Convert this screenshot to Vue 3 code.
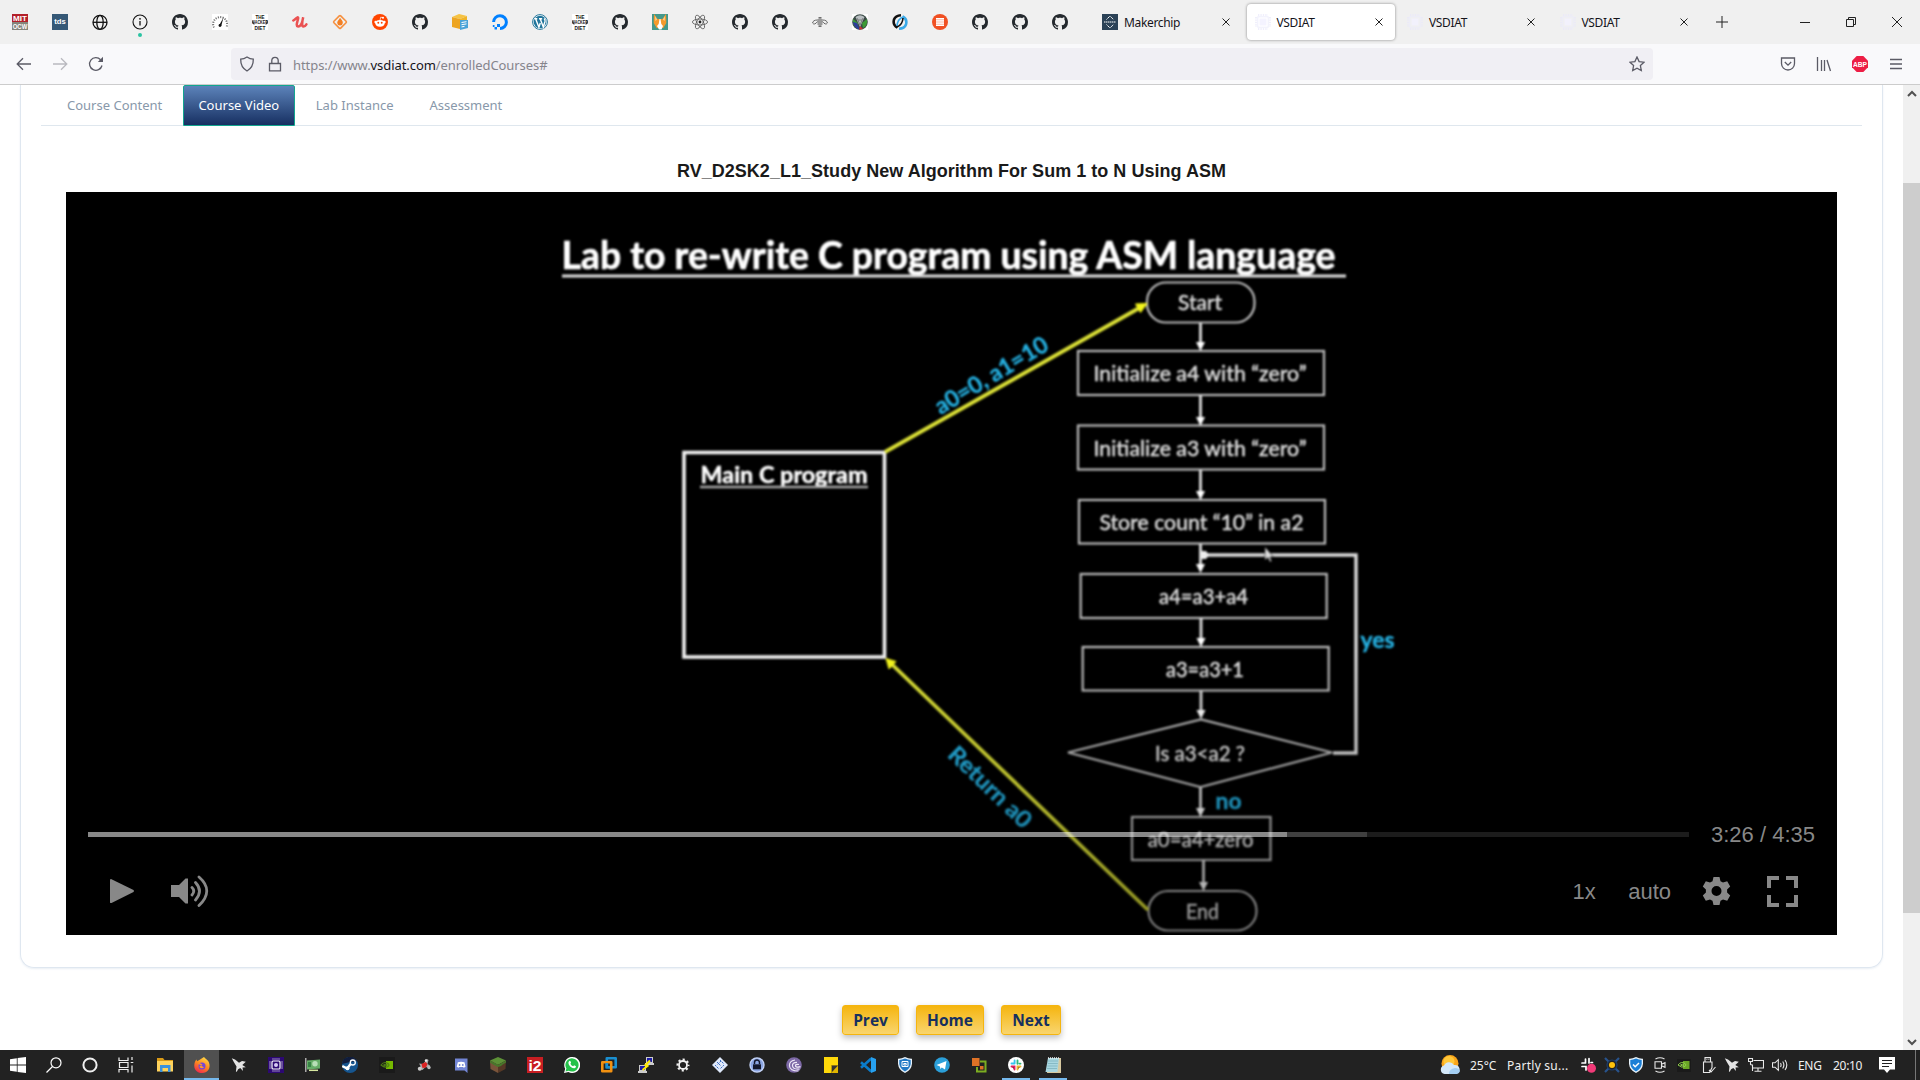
<script setup>
const pinned = [
  'mit', 'tds', 'globe', 'info', 'github', 'speed', 'hacker', 'udemy', 'flame', 'reddit',
  'github', 'box', 'ocean', 'wordpress', 'hacker', 'github', 'cat', 'react', 'github', 'github',
  'bee', 'orb', 'swirl', 'lines', 'github', 'github', 'github',
]
// Lettering on favicons and app icons, in 16-unit icon space
const lettering = {
  mit: [{ t: 'MIT', y: 6.6, size: 7, w: 14, fill: '#fff' }, { t: 'OCW', y: 14.7, size: 7, w: 14.5, fill: '#fff' }],
  tds: [{ t: 'tds', y: 10.3, size: 7.5, w: 11.5, fill: '#fff' }],
  hacker: [
    { t: 'THE', y: 4.7, size: 5, w: 9, fill: '#111' },
    { t: 'HACKER', y: 10.1, size: 5, w: 15.5, fill: '#111' },
    { t: 'DIET', y: 15.5, size: 5, w: 11, fill: '#111' },
  ],
  i2: [{ t: 'i2', y: 13.5, size: 15, w: 13, fill: '#fff' }],
}
const tabs = [
  { title: 'Makerchip', icon: 'makerchip' },
  { title: 'VSDIAT', icon: 'chip', active: true },
  { title: 'VSDIAT', icon: 'chip' },
  { title: 'VSDIAT', icon: 'chip' },
]
const courseTabs = [
  { name: 'Course Content' },
  { name: 'Course Video', active: true },
  { name: 'Lab Instance' },
  { name: 'Assessment' },
]
const system = ['windows', 'search', 'cortana', 'taskview']
const apps = [
  { icon: 'explorer' }, { icon: 'firefox', active: true }, { icon: 'jet' }, { icon: 'cpu' },
  { icon: 'card' }, { icon: 'steam' }, { icon: 'nvidia' }, { icon: 'plane' }, { icon: 'discord' },
  { icon: 'grass' }, { icon: 'i2' }, { icon: 'whatsapp' }, { icon: 'vmware' }, { icon: 'putty' },
  { icon: 'cog' }, { icon: 'diamond' }, { icon: 'lockapp' }, { icon: 'torrent' }, { icon: 'note' },
  { icon: 'vscode' }, { icon: 'shieldapp' }, { icon: 'telegram' }, { icon: 'blocks' },
  { icon: 'slack', open: true }, { icon: 'notepad', open: true },
]
const tray = ['slacktray', 'sun', 'defender', 'meet', 'nvtray', 'usb', 'jet', 'network', 'sound']

const steps = [
  { x: 1078, y: 351, w: 246, h: 44, text: 'Initialize a4 with “zero”', tx: 1093.5, tw: 213, ty: 381 },
  { x: 1078, y: 425.5, w: 246, h: 44, text: 'Initialize a3 with “zero”', tx: 1093.5, tw: 213, ty: 455.5 },
  { x: 1079, y: 500, w: 246, h: 43.5, text: 'Store count “10” in a2', tx: 1099.5, tw: 204, ty: 530 },
  { x: 1080.7, y: 574, w: 246, h: 44, text: 'a4=a3+a4', tx: 1159, tw: 89, ty: 604 },
  { x: 1082.7, y: 647, w: 246, h: 43.5, text: 'a3=a3+1', tx: 1166, tw: 78, ty: 677 },
  { x: 1132, y: 817, w: 138.5, h: 43, text: 'a0=a4+zero', tx: 1147.7, tw: 106, ty: 847 },
]
const arrows = [
  [1200.5, 323, 351], [1200.5, 395, 426], [1200.5, 470, 500], [1200.5, 544, 573],
  [1201, 618, 647], [1201, 691, 719], [1200.5, 787, 817], [1203.5, 860, 891],
]
</script>

<template>
  <svg class="sprite" aria-hidden="true">
    <defs>
      <linearGradient id="ffx" x1="0.8" y1="0" x2="0.3" y2="1">
        <stop offset="0" stop-color="#ffe14a" /><stop offset=".5" stop-color="#ff8a1e" /><stop offset="1" stop-color="#f0294e" />
      </linearGradient>
    </defs>
    <symbol id="github" viewBox="0 0 16 16"><path fill="#24292e" d="M8 0C3.58 0 0 3.58 0 8c0 3.54 2.29 6.53 5.47 7.59.4.07.55-.17.55-.38 0-.19-.01-.82-.01-1.49-2.01.37-2.53-.49-2.69-.94-.09-.23-.48-.94-.82-1.13-.28-.15-.68-.52-.01-.53.63-.01 1.08.58 1.23.82.72 1.21 1.87.87 2.33.66.07-.52.28-.87.51-1.07-1.78-.2-3.64-.89-3.64-3.95 0-.87.31-1.59.82-2.15-.08-.2-.36-1.02.08-2.12 0 0 .67-.21 2.2.82.64-.18 1.32-.27 2-.27.68 0 1.36.09 2 .27 1.53-1.04 2.2-.82 2.2-.82.44 1.1.16 1.92.08 2.12.51.56.82 1.27.82 2.15 0 3.07-1.87 3.75-3.65 3.95.29.25.54.73.54 1.48 0 1.07-.01 1.93-.01 2.2 0 .21.15.46.55.38A8.013 8.013 0 0 0 16 8c0-4.42-3.58-8-8-8z" /></symbol>
    <symbol id="mit" viewBox="0 0 16 16"><path fill="#b3202a" d="M0 0h16v8H0z" /><path fill="#85857a" d="M0 8h16v8H0z" /></symbol>
    <symbol id="tds" viewBox="0 0 16 16"><path fill="#355876" d="M0 0h16v16H0z" /></symbol>
    <symbol id="globe" viewBox="0 0 16 16"><g fill="none" stroke="#111" stroke-width="1.3"><circle cx="8" cy="8.3" r="7" /><ellipse cx="8" cy="8.3" rx="3.2" ry="7" /><path d="M1 8.3h14" /></g></symbol>
    <symbol id="info" viewBox="0 0 16 16"><circle cx="8" cy="8" r="7" fill="none" stroke="#111" stroke-width="1.1" /><path stroke="#111" stroke-width="1.3" d="M8 7v4.6" /><circle cx="8" cy="4.8" r=".9" fill="#111" /></symbol>
    <symbol id="speed" viewBox="0 0 16 16"><path fill="#fff" d="M0 0h16v16H0z" /><path d="M2 13.5A7 7 0 1 1 14.5 13" fill="none" stroke="#777" stroke-width="2" stroke-dasharray="1.2 1.2" /><path d="M11.5 3.5 9.2 12l-2-.8z" fill="#111" /><circle cx="8" cy="11.5" r="1.4" fill="#111" /></symbol>
    <symbol id="hacker" viewBox="0 0 16 16"><path fill="#fff" d="M0 0h16v16H0z" /><path d="M1 6.500q-1 2.500 1 4M15 6.500q1 2.500-1 4" fill="none" stroke="#111" stroke-width="1" /></symbol>
    <symbol id="udemy" viewBox="0 0 16 16"><path d="M1.300 6.500C4 5 6 2 6.200 4 6 7 3 12 6.200 12.600 9 12.600 10.500 7.500 11.200 3.200 10 8 9.600 12.300 11.500 12.600c1.200 0 2.200-1 2.900-2.200" fill="none" stroke="#ea5252" stroke-width="2.500" stroke-linecap="round" /></symbol>
    <symbol id="flame" viewBox="0 0 16 16"><rect x="3.200" y="3.200" width="9.600" height="9.600" rx="1" transform="rotate(45 8 8)" fill="none" stroke="#f6903f" stroke-width="1.600" /><path d="M8 3.800c2 2.500 3 3.600 2.800 5.300A2.800 2.800 0 0 1 8 11.600a2.800 2.800 0 0 1-2.800-2.500C5 7.400 7 6 8 3.800z" fill="#f48024" /></symbol>
    <symbol id="reddit" viewBox="0 0 16 16"><circle cx="8" cy="8" r="8" fill="#ff4500" /><ellipse cx="8" cy="9.300" rx="4.600" ry="3.400" fill="#fff" /><circle cx="3.600" cy="8" r="1.200" fill="#fff" /><circle cx="12.400" cy="8" r="1.200" fill="#fff" /><circle cx="11" cy="3.700" r="1" fill="#fff" /><path d="M8 6.200l.7-3 2.300.5M6 10.800q2 1.300 4 0" fill="none" stroke="#fff" stroke-width=".7" /><circle cx="6.300" cy="8.800" r=".95" fill="#ff4500" /><circle cx="9.700" cy="8.800" r=".95" fill="#ff4500" /></symbol>
    <symbol id="box" viewBox="0 0 16 16"><path fill="#f6c344" d="M0 3 7 0l8 2-7 3z" /><path fill="#eda522" d="M0 3l8 2v10l-8-2z" /><path fill="#f0b429" d="M8 5l7-3v4H8z" /><path fill="#4aa3d8" d="M8 6h8v8l-8 2z" /><path stroke="#fff" d="M9.500 8.500l5-.8m-5 3 5-.8m-5 3 3-.5" /></symbol>
    <symbol id="ocean" viewBox="0 0 16 16"><path d="M8 14.500A6.400 6.400 0 1 0 1.600 8" fill="none" stroke="#0080ff" stroke-width="3" /><path fill="#0080ff" d="M5 10h3v3H5zM2.500 13H5v2.500H2.500zM.8 11h1.700v2H.8z" /></symbol>
    <symbol id="wordpress" viewBox="0 0 16 16"><circle cx="8" cy="8" r="7.400" fill="#fff" stroke="#21759b" stroke-width="1" /><circle cx="8" cy="8" r="6.300" fill="#21759b" /><path d="M2.500 4.800h2.800M7 4.800h3.200M3.700 5l3.200 8.200L8.300 9M8.300 5l3 8L13 7.500q.4-2-1-3" fill="none" stroke="#fff" stroke-width="1.400" /></symbol>
    <symbol id="cat" viewBox="0 0 16 16"><path fill="#45998c" d="M0 0h16v16H0z" /><path fill="#f49a2c" d="M2 0l3.500 5h5L14 0l.3 9-3 5H4.700L1.700 9z" /><path fill="#fff" d="M7.500 5h1l.8 5 1.700 2-1.500 3.500H7L5 12l1.700-2z" /><path fill="#fbd7a5" d="M3 2l2 3.500L3.500 7zM13 2l-2 3.500L12.500 7z" /></symbol>
    <symbol id="react" viewBox="0 0 16 16"><g fill="none" stroke="#555" stroke-width=".8"><ellipse cx="8" cy="8" rx="7.600" ry="3" /><ellipse cx="8" cy="8" rx="7.600" ry="3" transform="rotate(60 8 8)" /><ellipse cx="8" cy="8" rx="7.600" ry="3" transform="rotate(120 8 8)" /></g><circle cx="8" cy="8" r="1.400" fill="#222" /></symbol>
    <symbol id="bee" viewBox="0 0 16 16"><g fill="none" stroke="#666" stroke-width="1"><path d="M5.500 6Q1 6 .6 9q1.800 2.600 5-1.500M10.500 6q4.500 0 4.900 3-1.800 2.600-5-1.500" /></g><path stroke="#444" stroke-width="1.200" d="M6.500 3.800h3M5.500 6h5M5.500 8h5M5.500 10h5M6.500 12.200h3" /></symbol>
    <symbol id="orb" viewBox="0 0 16 16"><path fill="#fff" d="M0 0h16v16H0z" /><circle cx="8" cy="8" r="7.800" fill="#3b4a46" /><path fill="#3c9a35" d="M1 5Q0 12 5 14l1-5zM15 5q1 7-4 9l-1-5z" /><path fill="#2c3c9a" d="M.8 8Q2 14 8 16L5 9z" /><path fill="#c33" d="M8 12l3 3-4 .8z" /><path d="M3.500 3Q8-.5 12.500 3L8 13z" fill="#b9bfc2" /><path d="M5 4l3 7 3-7M6 6h4" stroke="#666" stroke-width=".7" fill="none" /></symbol>
    <symbol id="swirl" viewBox="0 0 16 16"><path d="M5.500 13.500Q.5 11 2 5.500 3.500 1.500 9 1.300" fill="none" stroke="#111" stroke-width="2.600" /><path d="M10.500 2.500Q15.500 5 14 10.500 12.500 14.500 7 14.700" fill="none" stroke="#3aa9e8" stroke-width="2.600" /><path d="M11 3Q5.500 5 5 12" fill="none" stroke="#3aa9e8" stroke-width="1.600" /><path d="M5 13q5.500-2 6-9" fill="none" stroke="#111" stroke-width="1.600" /></symbol>
    <symbol id="lines" viewBox="0 0 16 16"><circle cx="8" cy="8" r="8" fill="#f05023" /><path fill="#fbb7a2" d="M4 4h8v8H4z" /><path stroke="#fff" stroke-width="1.200" d="M4 4.600h8M4 6.900h8M4 9.200h8M4 11.400h8" /></symbol>
    <symbol id="makerchip" viewBox="0 0 16 16"><path fill="#2b4257" d="M0 0h16v16H0z" /><path d="M4.500 5.500 8 2l3.500 3.500M4.500 10.500 8 14l3.500-3.500M2 8h12" fill="none" stroke="#fff" stroke-width="1" stroke-dasharray="1.500 .5" /></symbol>
    <symbol id="chip" viewBox="0 0 16 16"><g opacity=".85"><rect x="4.500" y="4.500" width="7" height="7" fill="#f3f2ff" /><rect x="2.800" y="2.800" width="10.400" height="10.400" fill="none" stroke="#ecebfb" stroke-width="1" /><path stroke="#e9e8fb" stroke-dasharray="1.400 1" d="M3 1h10M3 15h10M1 3v10M15 3v10" stroke-width="1.600" /></g></symbol>

    <symbol id="windows" viewBox="0 0 16 16"><path fill="#fff" d="M0 2.200l6.800-1v6.400H0zM7.600 1.100 16 0v7.600H7.600zM0 8.400h6.800v6.400L0 13.800zM7.600 8.400H16V16l-8.400-1.100z" /></symbol>
    <symbol id="search" viewBox="0 0 16 16"><g fill="none" stroke="#fff" stroke-width="1.200"><circle cx="10" cy="5.800" r="5" /><path d="M6.500 9.500.5 15.500" /></g></symbol>
    <symbol id="cortana" viewBox="0 0 16 16"><circle cx="8" cy="8" r="6.600" fill="none" stroke="#eee" stroke-width="2" /></symbol>
    <symbol id="taskview" viewBox="0 0 16 16"><path d="M1 .5v3h9v-3M1 15.500v-3h9v3M1.500 5.500h8.500v5H1.500zM14 0v3M14 8.500v7M12.700 5.500h2.600" fill="none" stroke="#eee" stroke-width="1.200" /></symbol>
    <symbol id="explorer" viewBox="0 0 16 16"><path fill="#d99a16" d="M0 1h6l1.500 2H16v4H0z" /><path fill="#ffd35c" d="M0 4h16v10.500H0z" /><path fill="#3a92dc" d="M3 8h10.500v7H11v-4H5.500v4H3z" /></symbol>
    <symbol id="firefox" viewBox="0 0 16 16"><path d="M10 0c1 1.600 3 2.400 4.300 4.200 2.500 4 1.700 11-6 11.800C2.500 16 0 12 .3 8 .5 5 1.600 3.500 2.600 2.500L3 4.300 5.300 3z" fill="url(#ffx)" /><circle cx="8" cy="9" r="3.500" fill="#7445d8" /><path d="M4 6.500c3-1 3 .8 4.500 1-.5 1.500-2.500 1-3 2 .4 2 3 2 4.500 1" fill="#ff9a24" /></symbol>
    <symbol id="jet" viewBox="0 0 16 16"><path fill="#e4e4e4" d="M.8 1.300 4 2.500l4 3.200 3-1.700 3.800.8L11.300 8l3.500 2.300-3.300.2.500 3.500-2.700-3-2.200 1.200-1.300 2.600-.9-.4.600-5L2.800 5z" /></symbol>
    <symbol id="cpu" viewBox="0 0 16 16"><path fill="#2c0873" d="M0 0h16v16H0z" /><g fill="none" stroke="#fff"><rect x="4" y="4" width="8" height="8" rx="1" stroke-width="1.200" /><path d="M4.500 2h7.500M4.500 14h7.500M2 4.500v7.500M14 4.500v7.500" stroke-dasharray="1 1" stroke-width="1.200" /></g><circle cx="8" cy="8" r="2" fill="#d9cbf5" /></symbol>
    <symbol id="card" viewBox="0 0 16 16"><path fill="#aaa" d="M0 1h1.500v14H0z" /><path fill="#67ae69" d="M2 3.500l13-1v9l-13 1z" /><circle cx="10" cy="6.800" r="2.700" fill="#b8dfb8" /><path stroke="#d7e7a0" stroke-width="1.500" d="M4 13.300h9" /><path fill="#378446" d="M3 5h3v5H3z" /></symbol>
    <symbol id="steam" viewBox="0 0 16 16"><circle cx="8" cy="8" r="8" fill="#16558f" /><path d="M0 7A8 8 0 0 1 15 4L8 5z" fill="#101c3c" /><circle cx="10.800" cy="5.500" r="2.500" fill="none" stroke="#fff" stroke-width="1.300" /><path d="M.3 9l5 2.500L8.500 7" fill="none" stroke="#fff" stroke-width="2.300" /><circle cx="5.500" cy="11.300" r="2" fill="#fff" /></symbol>
    <symbol id="nvidia" viewBox="0 0 16 16"><path fill="#1a1a1a" d="M0 0h16v16H0z" /><path fill="#76b900" d="M7 4h7v8H7z" /><path d="M2 8q3-4 7-1.500Q11 8 9 9.500 6 11.500 2 8zM4.500 8q2-1.500 3.500 0-1.500 1.500-3.500 0" fill="none" stroke="#4d7a15" stroke-width="1.100" /></symbol>
    <symbol id="plane" viewBox="0 0 16 16"><path fill="#aaa" d="M3 6.500l4 .5 4-5 1.500 1-1 4 2.500 1.500-1.500 2-3-.5-3 3-3-1 1-3z" /><path fill="#d22" d="M5.500 7l4-2 2 2-1.500 3.500-3.500.5z" /><circle cx="3.800" cy="11.800" r="2" fill="#ccc" /><circle cx="13" cy="10.500" r="1.700" fill="#bbb" /><circle cx="10" cy="3.500" r="1.200" fill="#eee" /></symbol>
    <symbol id="discord" viewBox="0 0 16 16"><path fill="#7386d5" d="M2 1.500h12.500V16l-3-2.500H2z" /><path fill="#fff" d="M4.800 5.300Q8 4.300 11.500 5.300l1 4.500-1.700 1L10 10H6.300l-.8.800-1.800-1z" /><circle cx="6.600" cy="8" r=".9" fill="#7386d5" /><circle cx="9.800" cy="8" r=".9" fill="#7386d5" /></symbol>
    <symbol id="grass" viewBox="0 0 16 16"><path fill="#5d9137" d="M8 0l8 3.500L8 8 0 3.500z" /><path fill="#79543a" d="M0 3.500L8 8v8l-7.500-4z" /><path fill="#553826" d="M16 3.500 8 8v8l7.500-4z" /><path fill="#47782b" d="M0 3.500 8 8l8-4.500v2L12 8l-1 1-3 1-2-1-2-1-4-2.500z" /></symbol>
    <symbol id="i2" viewBox="0 0 16 16"><path fill="#c81e22" d="M0 0h16v16H0z" /></symbol>
    <symbol id="whatsapp" viewBox="0 0 16 16"><path fill="#fff" d="M0 16l1.200-4.200A8 8 0 1 1 4.400 15z" /><path fill="#25c24a" d="M1.500 14.500l.9-3A6.600 6.600 0 1 1 4.700 13.700z" /><path fill="#fff" d="M5 4.200q1-.8 1.500 0l.6 1.500-.7 1q1 2 2.800 2.600l.9-1 1.900 1q.2 1.500-1.500 2Q7 11.500 4.800 7.500q-1-2 .2-3.300z" /></symbol>
    <symbol id="vmware" viewBox="0 0 16 16"><g fill="none" stroke-width="2.600" stroke-linejoin="round"><rect x="5.800" y="1.300" width="8.900" height="8.900" stroke="#1a8fd0" /><rect x="1.300" y="5.300" width="8.900" height="8.900" stroke="#f29111" /></g><path stroke="#1a8fd0" stroke-width="2.600" d="M5.800 6v4.200H9" fill="none" /></symbol>
    <symbol id="putty" viewBox="0 0 16 16"><path fill="#ccc" d="M8 0h7v6h1v2H7V6h1zM1 8h7v6h1v2H0v-2h1z" /><path fill="#1b1ba8" d="M9 1h5v4H9zM2 9h5v4H2z" /><path d="M12 3.500 7.500 8l2 1-5 4" fill="none" stroke="#ffe900" stroke-width="2" /></symbol>
    <symbol id="cog" viewBox="0 0 16 16"><circle cx="8" cy="8" r="5.500" fill="none" stroke="#f2f2f2" stroke-width="2" stroke-dasharray="2.160 2.160" stroke-dashoffset="1.080" /><circle cx="8" cy="8" r="4" fill="none" stroke="#f2f2f2" stroke-width="1.800" /></symbol>
    <symbol id="diamond" viewBox="0 0 16 16"><path fill="#dfe9fb" d="M8 0l8 8-8 8-8-8z" /><path d="M5 5l4 4M8 3l4 4M3 8l4 4M9 4 5 8M12 8l-4 4" stroke="#3d6fc4" stroke-width="1" stroke-dasharray="2 .8" /></symbol>
    <symbol id="lockapp" viewBox="0 0 16 16"><circle cx="8" cy="8" r="7.700" fill="#c6d5f8" /><circle cx="8" cy="8" r="6.400" fill="#8ba5e2" /><path fill="#14182c" d="M4 7.300h8v5H4z" /><path d="M5.500 7V5.500a2.500 2.500 0 0 1 5 0V7" fill="none" stroke="#14182c" stroke-width="1.500" /></symbol>
    <symbol id="torrent" viewBox="0 0 16 16"><circle cx="8" cy="8" r="7.800" fill="#7d69a6" /><g fill="none" stroke="#efe9f8" stroke-width="1.200"><path d="M9 3Q3 4 3.500 9t9 5M11 5.300Q6 5.500 6.500 9t7 3M13 7.500q-4-.5-3.500 1.500t5 .7" /></g></symbol>
    <symbol id="note" viewBox="0 0 16 16"><path fill="#ffd90a" d="M1 0h14v8H8.500v8H1z" /><path fill="#e0b500" d="M8.500 8H15v8H8.500z" /><path fill="#333" d="M9 8.500h6L9 15z" /></symbol>
    <symbol id="vscode" viewBox="0 0 16 16"><path d="M11.300 1.500 1 10.800M11.300 14.500 1 5.200" fill="none" stroke="#0b7cc9" stroke-width="2.600" /><path fill="#27a1f0" d="M11 0l5 2v12l-5 2z" /></symbol>
    <symbol id="shieldapp" viewBox="0 0 16 16"><path fill="#e9f3fb" d="M8 0q4 2 7 1.700v5Q14.500 13 8 16 1.500 13 1 6.700v-5Q4 2 8 0z" /><path fill="#2279c5" d="M8 1.500q3 1.300 5.700 1.500v4Q13 12 8 14.500 3 12 2.300 7V3Q5 2.800 8 1.500z" /><path d="M5 4.500h6v5H5zM6.800 6.500h2.400v1.500H6.800z" fill="none" stroke="#fff" stroke-width="1" /></symbol>
    <symbol id="telegram" viewBox="0 0 16 16"><circle cx="8" cy="8" r="7.800" fill="#2b9fd9" /><path fill="#fff" d="M2.500 8 12.500 4 11 12.500 7.800 10.500 6.300 12 6 9.500z" /></symbol>
    <symbol id="blocks" viewBox="0 0 16 16"><path fill="#df7226" d="M1 1h7.500v8H1z" /><path d="M9 4.500h5.500v10H6V10" fill="none" stroke="#7cad21" stroke-width="2" /><path fill="#df7226" d="M9 9h3.500v3.500H9z" /></symbol>
    <symbol id="slack" viewBox="0 0 16 16"><circle cx="8" cy="8" r="8" fill="#fff" /><g stroke-width="1.900" stroke-linecap="round"><path stroke="#36c5f0" d="M6.600 3.500v3M3.500 6.500h3" /><path stroke="#2eb67d" d="M9.500 3.500v3.200M12.500 6.600h-1" /><path stroke="#ecb22e" d="M9.500 12.500v-3h3" /><path stroke="#e01e5a" d="M6.500 12.500V9.500h-3" /></g></symbol>
    <symbol id="notepad" viewBox="0 0 16 16"><path fill="#d7c9a0" d="M4 1h12v15H2z" /><path fill="#a9d7e0" d="M3 1h11l-1.500 14H.5z" /><path stroke="#6ea6b2" stroke-width=".6" d="M3 4h10M2.800 6.500h10M2.500 9h10M2 11.500h10" /><path stroke="#eee" stroke-width="1.600" stroke-dasharray="1 1" d="M3 1h11" /></symbol>

    <symbol id="weather" viewBox="0 0 20 20"><circle cx="10" cy="8.500" r="8.500" fill="#f9a51a" /><circle cx="9" cy="6.500" r="5.500" fill="#ffc83a" /><path fill="#d4e9fa" d="M4.500 19A4.300 4.300 0 0 1 4 10.600a5.600 5.600 0 0 1 10-.6 4.600 4.600 0 1 1 2 9z" /><path fill="#a3cef2" d="M9 19q0-5 6-6 4 0 5 3-1 3-4 3z" /></symbol>
    <symbol id="slacktray" viewBox="0 0 16 16"><g stroke="#fff" stroke-width="1.700" stroke-linecap="round"><path d="M5.500 2v4M2 6h3.500M9 1.500v4.500M12.500 5.500H11M2 9.500h4V13" fill="none" /></g><circle cx="11.500" cy="11.300" r="4.500" fill="#f23a78" /></symbol>
    <symbol id="sun" viewBox="0 0 16 16"><path d="M1 1l3.500 3.500M15 1l-3.500 3.500M1 15l3.500-3.500M15 15l-3.500-3.500" stroke="#28538c" stroke-width="2.200" /><circle cx="8" cy="8" r="5" fill="none" stroke="#1e3e6c" stroke-width="1.200" /><circle cx="8" cy="8" r="3" fill="#ffc20c" /></symbol>
    <symbol id="defender" viewBox="0 0 16 16"><path fill="#e9f3fb" d="M8 0q4 2 7 1.700v5Q14.500 13 8 16 1.500 13 1 6.700v-5Q4 2 8 0z" /><path fill="#1c7fd6" d="M8 1.500q3 1.300 5.700 1.500v4Q13 12 8 14.500 3 12 2.300 7V3Q5 2.800 8 1.500z" /><path d="M5 7.500l2.200 2.300L11 6" fill="none" stroke="#fff" stroke-width="1.500" /></symbol>
    <symbol id="meet" viewBox="0 0 16 16"><path d="M3.500 2Q8-.500 12.500 2M3.500 14q4.500 2.500 9 0M3 4.800h6.500v6.400H3zM9.500 7.300l3.500-1.600v4.600L9.500 8.700" fill="none" stroke="#e8e8e8" stroke-width="1.100" /></symbol>
    <symbol id="nvtray" viewBox="0 0 16 16"><path fill="#1a1a1a" d="M1 2h14v13H1z" /><path fill="#6aa625" d="M7 4h6.500v8H7z" /><path d="M2 8q3-4 7-1.500Q11 8 9 9.500 6 11.500 2 8zM4.500 8q2-1.500 3.500 0-1.500 1.500-3.500 0" fill="none" stroke="#8fcf4b" stroke-width="1" /></symbol>
    <symbol id="usb" viewBox="0 0 16 16"><path d="M5 5V.6h5.500V5M3.500 5h8.500v5.500L9.500 15.500H3.500zM6.500 2.500h.8M8.500 2.500h.8M9 13l2 2L15.500 10" fill="none" stroke="#e8e8e8" stroke-width="1.100" /></symbol>
    <symbol id="network" viewBox="0 0 16 16"><path d="M5.500 3.500h10v7.500h-11M10 11v3M6.500 14.300h7M.5 1.500h4v3h-4zM2.500 4.500v3q0 .5 2 .5v6" fill="none" stroke="#e8e8e8" stroke-width="1.100" /></symbol>
    <symbol id="sound" viewBox="0 0 16 16"><path d="M.5 5.800H3L6.300 2.700v10.600L3 10.200H.5zM8.500 6q1.200 2 0 4M10.700 4.500q2.400 3.500 0 7M13 3q3.600 5 0 10" fill="none" stroke="#e8e8e8" stroke-width="1.100" /></symbol>
  </svg>

  <div class="desktop">
    <header class="tabstrip">
      <div class="pins">
        <span v-for="(p, i) in pinned" :key="i" class="pin">
          <svg class="i16" viewBox="0 0 16 16">
            <use :href="'#' + p" />
            <text v-for="l in lettering[p] || []" :key="l.t" class="mark" x="8" :y="l.y" :font-size="l.size" :fill="l.fill" :textLength="l.w" lengthAdjust="spacingAndGlyphs">{{ l.t }}</text>
          </svg>
          <i v-if="p === 'info'" class="dot" />
        </span>
      </div>
      <div v-for="(t, i) in tabs" :key="'t' + i" class="tab" :class="{ active: t.active }">
        <svg class="i16"><use :href="'#' + t.icon" /></svg>
        <span class="tab-title">{{ t.title }}</span>
        <svg class="x" viewBox="0 0 8 8"><path d="M.5.5l7 7M7.500.5l-7 7" /></svg>
      </div>
      <svg class="plus" viewBox="0 0 12 12"><path d="M6 0v12M0 6h12" /></svg>
      <div class="winctl">
        <svg viewBox="0 0 12 12"><path d="M1 6.500h10" /></svg>
        <svg viewBox="0 0 12 12"><path d="M1.500 3.500h7v7h-7zM3.500 3.500v-2h7v7h-2" /></svg>
        <svg viewBox="0 0 12 12"><path d="M1 1l10 10M11 1 1 11" /></svg>
      </div>
    </header>

    <nav class="toolbar">
      <div class="navbtns">
        <svg viewBox="0 0 16 16"><path d="M15 8H1.500M7 2.200 1.200 8 7 13.800" /></svg>
        <svg viewBox="0 0 16 16" class="dim"><path d="M1 8h13.500M9 2.200 14.800 8 9 13.800" /></svg>
        <svg viewBox="0 0 16 16"><path d="M14 9.500A6.300 6.300 0 1 1 12.600 3.800" /><path class="solid" d="M15 .8V6H9.800z" /></svg>
      </div>
      <div class="urlbar">
        <svg viewBox="0 0 16 16"><path d="M8 1q3 2 6.300 2.200.2 8-6.300 11.800Q1.500 11.200 1.700 3.200 5 3 8 1z" /></svg>
        <svg viewBox="0 0 16 16" class="lock"><path d="M2.500 7.500h11v7.300h-11zM4.800 7.300V4.500a3.200 3.200 0 0 1 6.400 0v2.800" /></svg>
        <span class="url">https://www.<b>vsdiat.com</b>/enrolledCourses#</span>
        <svg viewBox="0 0 16 16" class="star"><path d="M8 1l2.100 4.600 4.900.6-3.600 3.400.9 5L8 12.200l-4.300 2.400.9-5L1 6.200l4.900-.6z" /></svg>
      </div>
      <div class="tools">
        <svg viewBox="0 0 16 16"><path d="M1.500 2h13v5.500a6.500 6.500 0 0 1-13 0zM4.800 6 8 9.200 11.200 6" /></svg>
        <svg viewBox="0 0 16 16"><path d="M1.500 1v14M5.500 4v11M8.500 4v11M11 4l3.500 11" /></svg>
        <svg viewBox="0 0 16 16" class="abp"><path d="M4.700 0h6.600L16 4.700v6.600L11.300 16H4.700L0 11.300V4.700z" /><text x="8" y="10.800" text-anchor="middle" textLength="14" lengthAdjust="spacingAndGlyphs">ABP</text></svg>
        <svg viewBox="0 0 16 16"><path d="M2 3.500h12M2 8h12M2 12.500h12" /></svg>
      </div>
    </nav>

    <div class="viewport">
      <main class="page">
        <section class="card">
          <div class="course-tabs">
            <a v-for="c in courseTabs" :key="c.name" :class="{ active: c.active }">{{ c.name }}</a>
          </div>
          <h3>RV_D2SK2_L1_Study New Algorithm For Sum 1 to N Using ASM</h3>
          <div class="video">
            <svg class="frame" viewBox="66 192 1771 743">
              <g class="soft">
                <text class="head" x="561.500" y="269" textLength="774" lengthAdjust="spacingAndGlyphs">Lab to re-write C program using ASM language</text>
                <path d="M562 276H1346" stroke="#e0e0e0" stroke-width="3.200" />
                <g class="shape">
                  <rect x="1147" y="282.500" width="107.500" height="40" rx="19" />
                  <rect v-for="s in steps" :key="s.text" :x="s.x" :y="s.y" :width="s.w" :height="s.h" />
                  <path d="M1068 752.500 1201 719.500 1332 752.500 1200.500 787z" />
                  <rect x="1148.500" y="891" width="108" height="39.500" rx="19.500" />
                </g>
                <g class="label">
                  <text x="1178" y="309.500" textLength="44" lengthAdjust="spacingAndGlyphs">Start</text>
                  <text v-for="s in steps" :key="s.text" :x="s.tx" :y="s.ty" :textLength="s.tw" lengthAdjust="spacingAndGlyphs">{{ s.text }}</text>
                  <text x="1155" y="761" textLength="90" lengthAdjust="spacingAndGlyphs">Is a3&lt;a2 ?</text>
                  <text x="1186" y="918.500" textLength="33" lengthAdjust="spacingAndGlyphs">End</text>
                </g>
                <g v-for="(a, i) in arrows" :key="i">
                  <path :d="`M${a[0]} ${a[1]}V${a[2] - 4}`" stroke="#ddd" stroke-width="2.800" />
                  <path :d="`M${a[0] - 4.5} ${a[2] - 9}h9l-4.5 9z`" fill="#fff" />
                </g>
                <path d="M1333 753h23V555H1204" fill="none" stroke="#dcdcdc" stroke-width="3.400" />
                <path d="M1201 551h5l3 4-3 4h-5z" fill="#eee" />
                <path d="M1265 547v13l3-2.500 2 4.500 1.600-1-1.600-4h3.500z" fill="#ddd" stroke="#222" stroke-width=".6" />
                <rect x="684" y="452.500" width="200.500" height="204.500" fill="none" stroke="#f2f2f2" stroke-width="3.600" />
                <text class="main" x="700.500" y="482.500" textLength="167" lengthAdjust="spacingAndGlyphs">Main C program</text>
                <path d="M700 487H868" stroke="#aaa" stroke-width="2.600" />
                <g class="link">
                  <path d="M885 452 1141 307" /><path d="M1148 910 891 663.500" />
                  <path class="tip" d="M1147 303.500l-6.500 9-5-8.500z" /><path class="tip" d="M886 658.500l10 3-7 7.500z" />
                </g>
                <g class="note">
                  <text transform="translate(940.500 415) rotate(-31)" textLength="128" lengthAdjust="spacingAndGlyphs">a0=0, a1=10</text>
                  <text transform="translate(946.500 756) rotate(44)" textLength="106" lengthAdjust="spacingAndGlyphs">Return a0</text>
                  <text x="1360.500" y="648" textLength="34" lengthAdjust="spacingAndGlyphs">yes</text>
                  <text x="1215.500" y="808.500" textLength="26" lengthAdjust="spacingAndGlyphs">no</text>
                </g>
              </g>
            </svg>
            <div class="controls">
              <div class="row seek">
                <div class="track"><i class="buffered" /><i class="played" /></div>
                <span class="time">3:26 / 4:35</span>
              </div>
              <div class="row">
                <svg class="play" viewBox="0 0 24 24"><path d="M1 0 23.500 11q.8 1 0 2L1.500 24Q0 24.500 0 23V1.200Q0 0 1 0z" /></svg>
                <svg class="vol" viewBox="0 0 38 32"><path d="M0 10h8l6.500-6.500H17v25h-2.500L8 22H0z" /><g class="wave"><path d="M21 12.500q3.500 3.500 0 7.500M24.500 7.500q8 8.500 0 17.500M28 2q15.500 13.500 0 28.500" /></g></svg>
                <span class="gap" />
                <span class="rate">1x</span>
                <span class="quality">auto</span>
                <svg class="gear" viewBox="0 0 28 28"><path fill-rule="evenodd" d="M10.500 0h6l1 4.200 2.500 1.400 4.200-1.300 3 5.300-3.100 3v2.800l3.100 3-3 5.300-4.200-1.300-2.500 1.400-1 4.200h-6l-1-4.200L7 22.400l-4.200 1.300-3-5.300 3.100-3v-2.800l-3.100-3 3-5.300L7 5.600l2.500-1.400zM13.500 9a5 5 0 1 0 0 10 5 5 0 0 0 0-10z" /></svg>
                <svg class="fs" viewBox="0 0 31 31"><path d="M2 12V2h10M19 2h10v10M29 19v10H19M12 29H2V19" /></svg>
              </div>
            </div>
          </div>
        </section>
        <div class="buttons"><button class="prev">Prev</button><button class="home">Home</button><button class="next">Next</button></div>
      </main>
      <aside class="scroll">
        <svg viewBox="0 0 10 7"><path d="M1 6l4-4 4 4" /></svg>
        <div class="thumb" />
        <svg viewBox="0 0 10 7" class="down"><path d="M1 1l4 4 4-4" /></svg>
      </aside>
    </div>

    <footer class="taskbar">
      <span v-for="s in system" :key="s" class="sys"><svg class="i16"><use :href="'#' + s" /></svg></span>
      <div class="apps">
        <span v-for="a in apps" :key="a.icon" class="app" :class="{ active: a.active, open: a.open }">
          <svg class="i16" viewBox="0 0 16 16">
            <use :href="'#' + a.icon" />
            <text v-for="l in lettering[a.icon] || []" :key="l.t" class="mark" x="8" :y="l.y" :font-size="l.size" :fill="l.fill" :textLength="l.w" lengthAdjust="spacingAndGlyphs">{{ l.t }}</text>
          </svg>
        </span>
      </div>
      <div class="weather">
        <svg class="i20"><use href="#weather" /></svg>
        <span class="deg">25°C</span><span class="cond">Partly su...</span>
      </div>
      <span v-for="t in tray" :key="t" class="tray"><svg class="i16"><use :href="'#' + t" /></svg></span>
      <span class="lang">ENG</span>
      <span class="clock">20:10</span>
      <svg class="notif" viewBox="0 0 16 16"><path fill="#fff" d="M0 0h16v12.500h-5L8 16l-3-3.500H0z" /><path stroke="#222" d="M3 3.500h10M3 6.500h10M3 9.500h7" /></svg>
      <i class="peek" />
    </footer>
  </div>
</template>

<style>
body { margin: 0; overflow: hidden; }
</style>

<style scoped>
* { box-sizing: border-box; }
.sprite { position: absolute; width: 0; height: 0; }
.desktop { width: 1920px; height: 1080px; display: flex; flex-direction: column; background: #fff; overflow: hidden; font-family: "Noto Sans", "Open Sans", sans-serif; }
svg { display: block; flex: none; }
.i16 { width: 16px; height: 16px; }
.i20 { width: 20px; height: 20px; }
.mark { font-family: "Liberation Sans", Arial, sans-serif; font-weight: 700; text-anchor: middle; }

.tabstrip { height: 44px; flex: none; display: flex; align-items: center; background: #f0f0f0; }
.pins { display: flex; width: 1094px; }
.pin { width: 40px; height: 44px; flex: none; display: flex; align-items: center; justify-content: center; position: relative; }
.dot { position: absolute; top: 33px; left: 18px; width: 4px; height: 4px; border-radius: 50%; background: #2ac3a2; }
.tab { width: 148px; height: 36px; margin-right: 4.500px; display: flex; align-items: center; padding: 0 12px 0 8px; border-radius: 4px; flex: none; }
.tab.active { background: #fff; box-shadow: 0 0 3px rgba(0, 0, 0, .45); }
.tab-title { flex: 1; margin-left: 6px; font-size: 12px; letter-spacing: -.35px; color: #15141a; }
.x { width: 8px; height: 8px; }
.x path, .plus path, .winctl path { fill: none; stroke: #222; stroke-width: 1; }
.plus { width: 12px; height: 12px; margin-left: 12px; }
.winctl { margin-left: auto; display: flex; gap: 34px; padding-right: 17px; }
.winctl svg { width: 12px; height: 12px; }

.toolbar { height: 41px; flex: none; display: flex; align-items: center; background: #f9f9fb; border-bottom: 1px solid #ccc; }
.toolbar svg { width: 16px; height: 16px; }
.toolbar path { fill: none; stroke: #5b5b66; stroke-width: 1.300; }
.toolbar .solid { fill: #5b5b66; stroke: none; }
.navbtns { width: 231px; padding-left: 16px; display: flex; gap: 20px; }
.dim { opacity: .4; }
.urlbar { width: 1422px; height: 32px; display: flex; align-items: center; padding: 0 8px; background: #f0eff4; border-radius: 4px; }
.lock { margin-left: 12px; }
.url { margin-left: 10px; padding-top: 2px; flex: 1; font-size: 13px; letter-spacing: -.07px; color: #85848c; }
.url b { font-weight: 400; color: #15141a; }
.tools { margin-left: auto; display: flex; gap: 20px; padding-right: 16px; }
.toolbar .abp path { fill: #ed1e45; stroke: none; }
.abp text { font: 700 7px "Liberation Sans", sans-serif; fill: #fff; }

.viewport { flex: 1; min-height: 0; display: flex; }
.page { width: 1903px; display: flex; flex-direction: column; align-items: center; }
.card { width: 1863px; height: 883px; border: 1px solid #dfe7f0; border-top: 0; border-radius: 0 0 14px 14px; box-shadow: 0 1px 2px rgba(200, 215, 230, .4); }
.course-tabs { height: 41px; margin: 0 20px; padding-left: 10px; display: flex; border-bottom: 1px solid #dfe7ee; font-size: 13px; color: #8898aa; }
.course-tabs a { height: 41px; padding: 0 16px; line-height: 41px; white-space: nowrap; }
.course-tabs a:last-child { margin-left: 4px; }
.course-tabs a.active { width: 112px; text-align: center; border: 1px solid #12a58f; line-height: 39px; color: #fff; background: linear-gradient(#5c83ba, #173062); border-radius: 2px 2px 0 0; padding: 0; margin: 0 5px 0 4.500px; }
h3 { margin: 34px 0 0; height: 32px; text-align: center; font: 700 18px/22px "Liberation Sans", Arial, sans-serif; letter-spacing: .03px; color: #1a1a1a; }
.video { width: 1771px; height: 743px; margin-left: 45px; background: #000; position: relative; }
.frame { width: 1771px; height: 743px; }
.soft { filter: blur(.8px); font-family: Lato, sans-serif; }
.head { font-size: 39px; font-weight: 700; fill: #fff; stroke: #fff; stroke-width: .7; }
.shape { fill: none; stroke: #bcbcbc; stroke-width: 2.200; }
.label { font-size: 21.500px; fill: #dedede; stroke: #dedede; stroke-width: .5; }
.main { font-size: 22px; font-weight: 700; fill: #fff; stroke: #fff; stroke-width: .5; }
.link path { fill: none; stroke: #dce136; stroke-width: 3.800; }
.link .tip { fill: #f4f51c; stroke: #f4f51c; stroke-width: 1; }
.note { font-size: 23px; font-weight: 700; fill: #25aede; stroke: #25aede; stroke-width: .4; }
.controls { position: absolute; left: 0; right: 0; bottom: 0; height: 285px; padding-bottom: 29px; display: flex; flex-direction: column; justify-content: flex-end; gap: 27px; background: linear-gradient(rgba(0, 0, 0, 0), rgba(0, 0, 0, .36)); font: 22px/29px "Liberation Sans", Arial, sans-serif; color: #888; }
.row { height: 30px; display: flex; align-items: center; padding: 0 39px 0 44px; }
.row svg { fill: #888; }
.seek { height: 29px; padding: 0 22px; gap: 22px; }
.track { flex: 1; height: 5px; position: relative; background: rgba(255, 255, 255, .11); }
.track i { position: absolute; left: 0; top: 0; height: 5px; }
.buffered { width: 1279px; background: rgba(255, 255, 255, .16); }
.played { width: 1199px; background: rgba(255, 255, 255, .38); }
.time { width: 104px; white-space: nowrap; }
.play { width: 24px; height: 24px; }
.vol { width: 38px; height: 32px; margin-left: 37px; }
.wave path, .fs path { fill: none; stroke: #888; stroke-width: 2.800; stroke-linecap: round; }
.fs path { stroke-width: 4; stroke-linecap: butt; }
.gap { flex: 1; }
.quality { margin: 0 32px 0 32.500px; }
.gear { width: 28px; height: 28px; overflow: visible; }
.fs { width: 31px; height: 31px; margin-left: 36px; }
.buttons { display: flex; gap: 17px; margin-top: 37px; }
button { height: 30px; padding: 0; border: 1px solid #f5b50f; border-radius: 3px; background: linear-gradient(#f5b50f, #f9d56f); box-shadow: 0 3px 6px rgba(0, 0, 0, .25); font: 700 15.500px/26px "Open Sans", "Noto Sans", sans-serif; color: #16305f; }
.prev { width: 57px; }
.home { width: 68px; }
.next { width: 60px; }
.scroll { width: 17px; background: #f0f0f0; display: flex; flex-direction: column; align-items: center; }
.scroll svg { width: 10px; height: 7px; margin-top: 5px; }
.scroll path { fill: none; stroke: #505050; stroke-width: 2; }
.thumb { width: 17px; height: 730px; margin-top: 86px; background: #cdcdcd; }
.scroll .down { margin-top: auto; margin-bottom: 4px; }

.taskbar { height: 30px; flex: none; display: flex; align-items: center; background: #222; color: #f0f0f0; font-size: 12px; }
.sys { width: 36px; display: flex; justify-content: center; }
.apps { display: flex; width: 1291px; padding-left: 3px; }
.app { width: 35px; height: 30px; margin-right: 2px; display: flex; align-items: center; justify-content: center; flex: none; }
.app.active { background: #505050; border-bottom: 2px solid #76b9ed; padding-top: 2px; }
.app.open { background: linear-gradient(#76b9ed, #76b9ed) center bottom / 28px 2px no-repeat; }
.weather { display: flex; align-items: center; width: 141px; padding-left: 5px; white-space: nowrap; }
.deg { margin-left: 10px; width: 37px; }
.cond { letter-spacing: .25px; }
.tray { width: 24px; flex: none; display: flex; justify-content: center; }
.lang { margin-left: 6px; width: 35px; }
.clock { width: 46px; }
.lang, .clock { font-size: 12px; letter-spacing: -.3px; }
.notif { width: 16px; height: 16px; }
.peek { margin-left: auto; margin-right: 4px; width: 1px; height: 30px; background: #777; }
</style>
